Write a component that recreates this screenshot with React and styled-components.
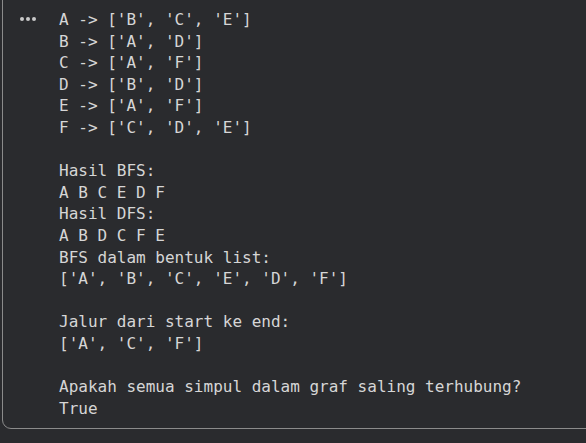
import React from "react";
import styled, { createGlobalStyle } from "styled-components";

const Global = createGlobalStyle`
  html, body { margin: 0; padding: 0; background: #2a2b2e; }
  body { width: 586px; height: 443px; overflow: hidden; }
`;

const Page = styled.div`
  width: 586px;
  height: 443px;
  background: #2a2b2e;
  overflow: hidden;
`;

const OutputCell = styled.div`
  margin: -12px 0 0 2px;
  width: 620px;
  box-sizing: border-box;
  border: 1px solid #8b8b8b;
  border-radius: 0 0 0 9px;
  padding: 20px 0 9px 0;
  display: flex;
  align-items: flex-start;
`;

const Gutter = styled.div`
  width: 56px;
  flex: none;
  display: flex;
  justify-content: flex-start;
  padding: 8px 0 0 17px;
  box-sizing: border-box;
  gap: 2px;
`;

const Dot = styled.span`
  width: 4px;
  height: 4px;
  border-radius: 50%;
  background: #c9c9c9;
`;

const Pre = styled.pre`
  margin: 0;
  font-family: "DejaVu Sans Mono", "Liberation Mono", monospace;
  font-size: 16px;
  line-height: 21.6px;
  color: #d6d6d6;
  white-space: pre;
`;

const text = `A -> ['B', 'C', 'E']
B -> ['A', 'D']
C -> ['A', 'F']
D -> ['B', 'D']
E -> ['A', 'F']
F -> ['C', 'D', 'E']

Hasil BFS:
A B C E D F
Hasil DFS:
A B D C F E
BFS dalam bentuk list:
['A', 'B', 'C', 'E', 'D', 'F']

Jalur dari start ke end:
['A', 'C', 'F']

Apakah semua simpul dalam graf saling terhubung?
True`;

export default function App() {
  return (
    <Page>
      <Global />
      <OutputCell>
        <Gutter>
          <Dot />
          <Dot />
          <Dot />
        </Gutter>
        <Pre>{text}</Pre>
      </OutputCell>
    </Page>
  );
}
